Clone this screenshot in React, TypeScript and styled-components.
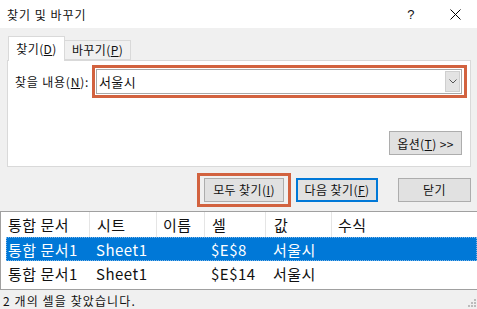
import React from "react";
import styled, { createGlobalStyle } from "styled-components";

const Global = createGlobalStyle`
  html, body { margin: 0; padding: 0; }
  body {
    width: 477px;
    height: 309px;
    overflow: hidden;
    background: #f0f0f0;
    font-family: "Noto Sans CJK KR", "Noto Sans", sans-serif;
    font-size: 12px;
    letter-spacing: 0.4px;
    color: #111;
  }
  * { box-sizing: border-box; }
`;

const Window = styled.div`
  width: 477px;
  height: 309px;
  display: flex;
  flex-direction: column;
`;

const TitleBar = styled.div`
  height: 28px;
  background: #fff;
  display: flex;
  align-items: center;
  padding-left: 7px;
  font-size: 12px;
`;

const Title = styled.div`
  flex: 1;
  letter-spacing: 1px;
`;

const TitleButton = styled.div`
  width: 44px;
  height: 28px;
  display: flex;
  align-items: center;
  justify-content: center;
  font-size: 13px;
  font-family: "Liberation Sans", sans-serif;
`;

const Tabs = styled.div`
  display: flex;
  align-items: flex-start;
  margin: 8px 0 0 8px;
  height: 24px;
  position: relative;
  z-index: 1;
`;

const Tab = styled.div<{ $active?: boolean }>`
  display: flex;
  align-items: center;
  justify-content: center;
  border: 1px solid #d9d9d9;
  border-bottom: ${(p) => (p.$active ? "none" : "1px solid #d9d9d9")};
  background: ${(p) => (p.$active ? "#fff" : "#f0f0f0")};
  width: ${(p) => (p.$active ? "57px" : "67px")};
  height: ${(p) => (p.$active ? "25px" : "20px")};
  margin-top: ${(p) => (p.$active ? "0" : "4px")};
  margin-left: ${(p) => (p.$active ? "0" : "-1px")};
  padding-bottom: 1px;
`;

const U = styled.span`
  text-decoration: underline;
  text-underline-offset: 1px;
`;

const Panel = styled.div`
  margin: 0 6px 0 7px;
  height: 107px;
  background: #fff;
  border: 1px solid #d9d9d9;
  display: flex;
  flex-direction: column;
  padding: 4px 3px 0 7px;
`;

const FindRow = styled.div`
  display: flex;
  align-items: center;
`;

const Label = styled.div`
  width: 77px;
  flex: none;
  letter-spacing: 0.8px;
`;

const Highlight = styled.div`
  border: 3px solid #d2623f;
  padding: 1px 2px 1px 1px;
  display: flex;
`;

const WideHighlight = styled(Highlight)`
  flex: 1;
  height: 33px;
`;

const Combo = styled.div`
  flex: 1;
  display: flex;
  border: 1px solid #a8a8a8;
  background: #fff;
  height: 100%;
  padding: 1px;
`;

const ComboText = styled.div`
  flex: 1;
  display: flex;
  align-items: center;
  padding-left: 1px;
  font-size: 13px;
`;

const ComboArrow = styled.div`
  width: 15px;
  background: #e3e3e3;
  border: 1px solid #cfcfcf;
  display: flex;
  align-items: center;
  justify-content: center;
`;

const OptionsRow = styled.div`
  display: flex;
  justify-content: flex-end;
  margin-top: 33px;
  padding-right: 5px;
`;

const Button = styled.div<{ $w: number; $primary?: boolean }>`
  width: ${(p) => p.$w}px;
  height: 24px;
  background: #e1e1e1;
  border: ${(p) => (p.$primary ? "2px solid #0078d7" : "1px solid #adadad")};
  display: flex;
  align-items: center;
  justify-content: center;
  font-size: 12px;
  white-space: nowrap;
`;

const ButtonRow = styled.div`
  display: flex;
  align-items: center;
  justify-content: flex-end;
  margin-top: 5px;
  height: 35px;
  padding-right: 6px;
`;

const ButtonHighlight = styled.div`
  border: 3px solid #d2623f;
  padding: 2px 4px;
  margin-right: 5px;
`;

const Gap = styled.div<{ $w: number }>`
  width: ${(p) => p.$w}px;
`;

const List = styled.div`
  margin-top: 4px;
  height: 79px;
  background: #fff;
  border-top: 1px solid #a0a0a0;
  border-bottom: 1px solid #a0a0a0;
  border-left: 1px solid #a0a0a0;
  font-size: 15px;
  letter-spacing: 0.5px;
`;

const cols = "83px 67px 48px 61px 66px 1fr";

const HeaderRow = styled.div`
  display: grid;
  grid-template-columns: 89px 67px 48px 61px 66px 1fr;
  height: 25px;
`;

const HeaderCell = styled.div<{ $pad: number }>`
  display: flex;
  align-items: center;
  padding-left: ${(p) => p.$pad}px;
  border-right: 1px solid #e5e5e5;
  white-space: nowrap;
  &:last-child { border-right: none; }
`;

const Row = styled.div<{ $selected?: boolean }>`
  display: grid;
  grid-template-columns: ${cols};
  height: 24px;
  margin-left: 5px;
  background: ${(p) => (p.$selected ? "#0078d7" : "#fff")};
  color: ${(p) => (p.$selected ? "#fff" : "#111")};
  outline: ${(p) => (p.$selected ? "1px dotted #7fb6e8" : "none")};
  outline-offset: -1px;
`;

const Cell = styled.div<{ $pad: number }>`
  display: flex;
  align-items: center;
  padding-left: ${(p) => p.$pad}px;
  white-space: nowrap;
`;

const StatusBar = styled.div`
  flex: 1;
  display: flex;
  align-items: center;
  padding-left: 3px;
  padding-top: 1px;
  position: relative;
  font-size: 12px;
  letter-spacing: 1.1px;
`;

const Grip = styled.svg`
  position: absolute;
  right: 1px;
  bottom: 1px;
`;

const headers: [string, number][] = [
  ["통합 문서", 7],
  ["시트", 7],
  ["이름", 6],
  ["셀", 7],
  ["값", 8],
  ["수식", 6],
];

const rows = [
  { book: "통합 문서1", sheet: "Sheet1", name: "", cell: "$E$8", value: "서울시", selected: true },
  { book: "통합 문서1", sheet: "Sheet1", name: "", cell: "$E$14", value: "서울시", selected: false },
];

const pads = [2, 7, 6, 7, 8, 6];

export default function App() {
  return (
    <Window>
      <Global />
      <TitleBar>
        <Title>찾기 및 바꾸기</Title>
        <TitleButton>?</TitleButton>
        <TitleButton>
          <svg width="11" height="11" viewBox="0 0 11 11">
            <path d="M0.5 0.5 L10.5 10.5 M10.5 0.5 L0.5 10.5" stroke="#000" strokeWidth="1" />
          </svg>
        </TitleButton>
      </TitleBar>
      <Tabs>
        <Tab $active>
          찾기(<U>D</U>)
        </Tab>
        <Tab>
          바꾸기(<U>P</U>)
        </Tab>
      </Tabs>
      <Panel>
        <FindRow>
          <Label>
            찾을 내용(<U>N</U>):
          </Label>
          <WideHighlight>
            <Combo>
              <ComboText>서울시</ComboText>
              <ComboArrow>
                <svg width="8" height="5" viewBox="0 0 8 5">
                  <path d="M0.5 0.5 L4 4 L7.5 0.5" stroke="#555" strokeWidth="1" fill="none" />
                </svg>
              </ComboArrow>
            </Combo>
          </WideHighlight>
        </FindRow>
        <OptionsRow>
          <Button $w={73}>
            옵션(<U>T</U>) &gt;&gt;
          </Button>
        </OptionsRow>
      </Panel>
      <ButtonRow>
        <ButtonHighlight>
          <Button $w={80}>
            모두 찾기(<U>I</U>)
          </Button>
        </ButtonHighlight>
        <Button $w={82} $primary>
          다음 찾기(<U>F</U>)
        </Button>
        <Gap $w={20} />
        <Button $w={73}>닫기</Button>
      </ButtonRow>
      <List>
        <HeaderRow>
          {headers.map(([h, p]) => (
            <HeaderCell key={h} $pad={p}>
              {h}
            </HeaderCell>
          ))}
        </HeaderRow>
        {rows.map((r, i) => (
          <Row key={i} $selected={r.selected}>
            {[r.book, r.sheet, r.name, r.cell, r.value, ""].map((c, j) => (
              <Cell key={j} $pad={pads[j]}>
                {c}
              </Cell>
            ))}
          </Row>
        ))}
      </List>
      <StatusBar>
        2 개의 셀을 찾았습니다.
        <Grip width="10" height="10" viewBox="0 0 10 10">
          {[
            [8, 0],
            [8, 3],
            [5, 3],
            [8, 6],
            [5, 6],
            [2, 6],
          ].map(([x, y], i) => (
            <rect key={i} x={x} y={y + 1} width="2" height="2" fill="#bcbcbc" />
          ))}
        </Grip>
      </StatusBar>
    </Window>
  );
}
